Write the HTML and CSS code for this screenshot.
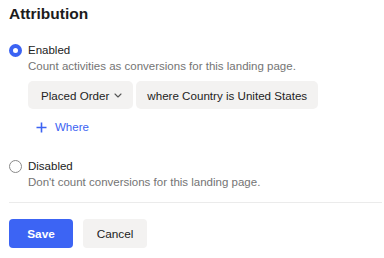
FILE: index.html
```html
<!DOCTYPE html>
<html lang="en">
<head>
    <meta charset="UTF-8">
    <title>Attribution</title>
    <link rel="stylesheet" href="styles.css">
</head>
<body>
    <h2 class="title">Attribution</h2>

    <div class="option">
        <span class="radio checked"></span>
        <div class="option-body">
            <div class="option-label">Enabled</div>
            <div class="option-desc">Count activities as conversions for this landing page.</div>
            <div class="pills">
                <button class="pill">Placed Order
                    <svg class="chevron" width="8" height="5" viewBox="0 0 8 5"><path d="M1 1l3 3 3-3" fill="none" stroke="#555" stroke-width="1.1" stroke-linecap="round" stroke-linejoin="round"/></svg>
                </button>
                <button class="pill">where Country is United States</button>
            </div>
            <button class="add-where">
                <svg width="11" height="11" viewBox="0 0 11 11"><path d="M5.5 0.5v10M0.5 5.5h10" stroke="#3c63f2" stroke-width="1.6"/></svg>
                <span>Where</span>
            </button>
        </div>
    </div>

    <div class="option disabled-option">
        <span class="radio"></span>
        <div class="option-body">
            <div class="option-label">Disabled</div>
            <div class="option-desc">Don't count conversions for this landing page.</div>
        </div>
    </div>

    <hr class="divider">

    <div class="actions">
        <button class="btn btn-primary">Save</button>
        <button class="btn btn-secondary">Cancel</button>
    </div>
</body>
</html>
```

FILE: styles.css
```css
body {
    font-family: "Liberation Sans", Arial, sans-serif;
    font-size: 11.5px;
    color: #202020;
    margin: 0;
    padding: 4px 2px 0 9px;
    background: #fff;
}
.title {
    margin: 0;
    font-size: 15.5px;
    line-height: 20px;
    font-weight: bold;
    color: #1c1c1c;
}
.option {
    display: flex;
    gap: 6px;
    margin-top: 18px;
}
.disabled-option {
    margin-top: 23px;
}
.radio {
    flex: none;
    box-sizing: border-box;
    width: 13px;
    height: 13px;
    margin-top: 1.5px;
    border-radius: 50%;
    border: 1px solid #8a8a8a;
    background: #fff;
}
.radio.checked {
    border: 4.5px solid #3b63f3;
}
.option-label {
    line-height: 16px;
    color: #222;
}
.option-desc {
    line-height: 16px;
    color: #747474;
}
.pills {
    display: flex;
    gap: 3px;
    margin-top: 7px;
}
.pill {
    font-family: inherit;
    font-size: 11.6px;
    color: #232323;
    background: #f3f2f1;
    border: none;
    border-radius: 5px;
    height: 28px;
    padding: 0 11px 0 13px;
    display: flex;
    align-items: center;
    gap: 5px;
}
.pill + .pill {
    padding: 0 11px;
}
.chevron {
    margin-top: 1px;
}
.add-where {
    display: flex;
    align-items: center;
    gap: 8px;
    margin-top: 10px;
    padding: 0 0 0 8px;
    border: none;
    background: none;
    font-family: inherit;
    font-size: 11.5px;
    line-height: 16px;
    color: #3c63f2;
}
.divider {
    border: none;
    border-top: 1.5px solid #ebebeb;
    margin: 12px 0 16px;
}
.actions {
    display: flex;
    gap: 10px;
}
.btn {
    font-family: inherit;
    font-size: 11.8px;
    height: 29px;
    width: 64px;
    border: none;
    border-radius: 4px;
}
.btn-primary {
    background: #3c64f4;
    color: #fff;
    font-weight: bold;
}
.btn-secondary {
    background: #f3f2f1;
    color: #222;
}
```
